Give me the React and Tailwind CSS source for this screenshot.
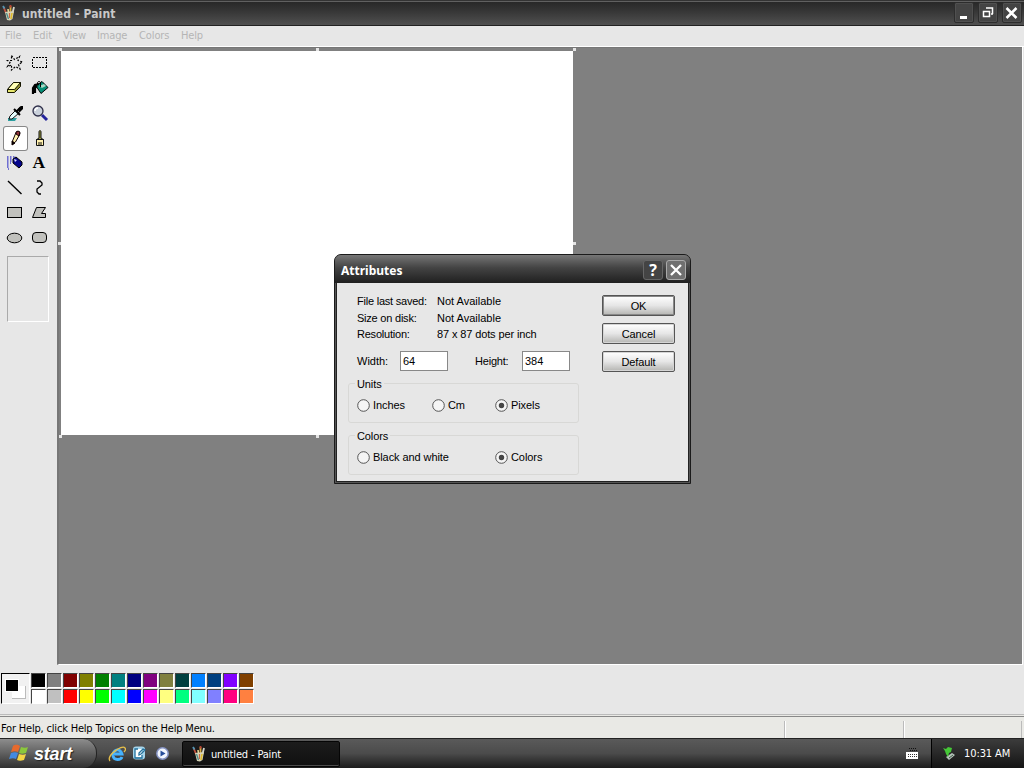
import React from "react";

const tahoma = "font-['DejaVu_Sans_Condensed','DejaVu_Sans',sans-serif] [font-stretch:condensed]";
const sans = "font-['Liberation_Sans',sans-serif]";

const toolIcons = [
  <g key="free">
    <path d="M8.500 4.500L11.500 8.500L16.500 5.500L15 9.500L19.500 11L15.500 13.500L17 18L12.500 15.500L8.500 19V14L4.500 15.500L7 11.500L4.500 9.500H8.500Z" fill="none" stroke="#000" strokeWidth="1.200" strokeDasharray="2 1.500" />
  </g>,
  <rect key="sel" x="4.500" y="6.500" width="14" height="10" fill="none" stroke="#000" strokeDasharray="2 1" shapeRendering="crispEdges" />,
  <g key="eraser" stroke="#151500">
    <path d="M4.500 13.500L10.500 6.500L17.500 6.500L17.500 10.500L11.500 16.500L4.500 16.500Z" fill="#8d8d30" />
    <path d="M4.500 13.500L10.500 6.500L17.500 6.500L11.500 13.500Z" fill="#ffffb5" />
    <path d="M5 14h6.500v2H5z" fill="#e6e66c" stroke="none" />
  </g>,
  <g key="fill" stroke="#000">
    <path d="M8 10L14 5.500L20 11.500L13 17.500Z" fill="#079078" />
    <path d="M11 10l5-2 2 2-4 2z" fill="#a9d8c4" stroke="none" />
    <path d="M12.500 11V7c0-2-3-2-3 0v2" fill="none" />
    <path d="M5 18v-6l2-3 4-1M7 17v-5l2-2" fill="none" strokeWidth="2.200" />
  </g>,
  <g key="pick">
    <path d="M5 17h9l-2 3H5z" fill="#2d9fa0" />
    <path d="M6 18l1-3 6-6 3 3-7 6z" fill="#e8ffff" stroke="#111" />
    <path d="M11 8l6 6M14 10l4-4" stroke="#000" strokeWidth="2" />
    <path d="M15 8l3-3h2v3l-4 4z" fill="#000" />
  </g>,
  <g key="zoom">
    <path d="M14 14l5 5" stroke="#23239b" strokeWidth="3" />
    <circle cx="10" cy="10" r="5" fill="#cad1db" stroke="#30304a" strokeWidth="1.300" />
    <path d="M7 10c0-2 1-3 3-3" fill="none" stroke="#fff" strokeWidth="1.500" />
  </g>,
  <g key="pencil" stroke="#100">
    <path d="M9.500 18.500V15L13 6.500L14.500 5.500L17 7L16.500 9L12.500 16Z" fill="#fff2b0" />
    <path d="M13 6l2-1 2 1-1 4-3-2z" fill="#90313a" />
    <path d="M9 19v-4l3 2z" fill="#000" />
  </g>,
  <g key="brush" stroke="#111">
    <path d="M11 12V6c0-2 2-2 2 0v6l3 2H8z" fill="#96963d" />
    <path d="M8.500 13.500h7v6h-7z" fill="#fff0ae" />
    <path d="M11 16v3M13 16v3" />
  </g>,
  <g key="spray">
    <path d="M4 6h8M4 8h6M4 10h5M4 12h4M4 14h3M4 16h2M5 18h1" stroke="#4949cc" strokeWidth="1.300" strokeDasharray="1.500 1.500" />
    <path d="M10 8l3-2 6 5v3l-3 3-6-5z" fill="#05058d" stroke="#000" />
    <path d="M11 8l3 1-2 2z" fill="#dcdcff" />
  </g>,
  <text key="text" x="4.500" y="17" fontSize="17.500" fontWeight="bold" fontFamily="Liberation Serif, serif">A</text>,
  <path key="line" d="M5 5l13.500 13" stroke="#000" strokeWidth="1.400" />,
  <path key="curve" d="M9 5h3l2 2v2l-5 4v3l2 2h2" fill="none" stroke="#000" strokeWidth="1.300" />,
  <rect key="rect" x="4.500" y="6.500" width="14" height="10" fill="#c1c1bd" stroke="#000" />,
  <path key="poly" d="M8.500 6.500h9l-4 6h4v4h-13z" fill="#c1c1bd" stroke="#000" />,
  <ellipse key="oval" cx="11.500" cy="12" rx="7.300" ry="4.800" fill="#c1c1bd" stroke="#000" />,
  <rect key="round" x="4.500" y="6.500" width="14" height="10" rx="3.500" fill="#c1c1bd" stroke="#000" />,
];

const palette = [
  "#000000", "#808080", "#800000", "#808000", "#008000", "#008080", "#000080", "#800080", "#808040", "#004040", "#0080ff", "#004080", "#8000ff", "#804000",
  "#ffffff", "#c0c0c0", "#ff0000", "#ffff00", "#00ff00", "#00ffff", "#0000ff", "#ff00ff", "#ffff80", "#00ff80", "#80ffff", "#8080ff", "#ff0080", "#ff8040",
];

function PaintIcon({ className = "" }) {
  return (
    <svg className={`h-4 w-4 shrink-0 ${className}`} viewBox="0 0 16 16">
      <path d="M5 8L3 3" stroke="#c2533e" strokeWidth="1.800" />
      <path d="M7.500 8L7 4" stroke="#f5e09a" strokeWidth="1.500" />
      <path d="M9.500 8V1" stroke="#d9ac42" strokeWidth="1.800" />
      <path d="M11.500 8l1.500-6" stroke="#d6d6cb" strokeWidth="1.800" />
      <path d="M2 1l1.500 2.500" stroke="#5795b5" strokeWidth="1.800" />
      <path d="M9.500 0v2.500" stroke="#b94436" strokeWidth="1.800" />
      <path d="M4 7l9-1-1.500 8L9 15.500 6 15z" fill="#d8d3b5" />
      <path d="M5.500 8l2 6" stroke="#4d8c8d" strokeWidth="1.300" />
      <path d="M8.500 8v5" stroke="#c76946" strokeWidth="1.200" />
      <path d="M11 8l-1 6" stroke="#dfbb28" strokeWidth="1.500" />
    </svg>
  );
}

function Caption({ kind }) {
  return (
    <div className="flex h-[21px] w-[20px] items-center justify-center rounded-[2px] border border-[#2d2d2d] bg-[#444] shadow-[inset_0_0_0_1px_#505050]">
      <svg className="h-4 w-4" viewBox="0 0 16 16" fill="none" stroke="#fff">
        {kind === "min" && <path d="M4 12.500h7" strokeWidth="3" />}
        {kind === "max" && <path d="M3.500 6.500h6v5h-6zM3 6.500h7M6 3h6.500V9M11 9h2" strokeWidth="1.500" />}
        {kind === "close" && <path d="M2.500 3l10 10M12.500 3l-10 10" strokeWidth="2.500" />}
      </svg>
    </div>
  );
}

function Radio({ label, checked, className = "" }) {
  return (
    <label className={`flex items-center gap-[3px] ${className}`}>
      <svg className="h-[13px] w-[13px] shrink-0" viewBox="0 0 13 13">
        <circle cx="6.500" cy="6.500" r="5.800" fill="#f5f5f5" stroke="#555" />
        {checked && <circle cx="6.500" cy="6.500" r="2.700" fill="#454545" />}
      </svg>
      <span className="whitespace-nowrap tracking-[-0.08px]">{label}</span>
    </label>
  );
}

function DialogButton({ children, primary }) {
  return (
    <button
      className={`h-[21px] w-[73px] rounded-[2px] border border-[#555] bg-linear-to-b from-white via-[#e6e6e6] to-[#b5b5b2] text-center leading-[20px] tracking-[-0.1px] ${primary ? "shadow-[inset_0_0_0_1px_#888]" : "shadow-[inset_0_0_0_1px_#d5d5d5]"}`}
    >
      {children}
    </button>
  );
}

function Group({ title, children, className = "" }) {
  return (
    <fieldset className={`h-[46px] w-[231px] rounded-[3px] border border-[#d8d8d6] ${className}`}>
      <legend className="ml-[6px] h-[14px] px-[2px] leading-[14px] tracking-[-0.1px]">{title}</legend>
      <div className="flex h-[30px] items-center pl-[8px]">{children}</div>
    </fieldset>
  );
}

function Attributes() {
  return (
    <section className={`absolute left-[334px] top-[254px] h-[230px] w-[357px] overflow-hidden rounded-t-[7px] border border-[#1b1b1b] bg-[#555] text-[11px] text-black ${sans}`}>
      <header className="flex h-[28px] items-center bg-linear-to-b from-[#777] via-[#444] via-45% to-[#202020] pl-[6px] pr-[4px] pt-[2px] text-white">
        <span className="flex-1 pt-[2px] font-['Noto_Sans',sans-serif] text-[12px] font-bold">Attributes</span>
        <div className="mr-[3px] flex h-[20px] w-[20px] items-center justify-center rounded-[3px] border border-[#666] bg-[#444] font-['Noto_Sans',sans-serif] text-[16px] font-bold leading-[18px]">?</div>
        <div className="flex h-[20px] w-[20px] items-center justify-center rounded-[3px] border border-[#aaa] bg-[#707070]">
          <svg className="h-[14px] w-[14px]" viewBox="0 0 14 14"><path d="M2 2l10 10M12 2L2 12" stroke="#fff" strokeWidth="2.300" /></svg>
        </div>
      </header>
      <div className="mx-[1px] flex h-[199px] border border-t-0 border-[#222] bg-[#e7e7e7] pl-[11px] pt-[10px]">
        <div className="w-[254px] shrink-0">
          <dl className="grid grid-cols-[80px_1fr] pl-[9px] leading-[16.500px]">
            <dt className="tracking-[-0.22px]">File last saved:</dt><dd>Not Available</dd>
            <dt className="tracking-[-0.22px]">Size on disk:</dt><dd>Not Available</dd>
            <dt className="tracking-[-0.22px]">Resolution:</dt><dd className="tracking-[-0.12px]">87 x 87 dots per inch</dd>
          </dl>
          <div className="mt-[8px] flex h-[20px] items-center pl-[9px]">
            <span className="w-[43px] pt-[2px]">Width:</span>
            <span className="h-[20px] w-[48px] border border-[#888] bg-white pl-[2px] leading-[18px]">64</span>
            <span className="ml-[27px] w-[47px] pt-[2px] tracking-[-0.2px]">Height:</span>
            <span className="h-[20px] w-[48px] border border-[#888] bg-white pl-[2px] leading-[18px]">384</span>
          </div>
          <Group title="Units" className="mt-[6px]">
            <Radio label="Inches" className="w-[75px]" />
            <Radio label="Cm" className="w-[63px]" />
            <Radio label="Pixels" checked />
          </Group>
          <Group title="Colors" className="mt-[6px]">
            <Radio label="Black and white" className="w-[138px]" />
            <Radio label="Colors" checked />
          </Group>
        </div>
        <div className="flex flex-col gap-[7px] pt-[2px]">
          <DialogButton primary>OK</DialogButton>
          <DialogButton>Cancel</DialogButton>
          <DialogButton>Default</DialogButton>
        </div>
      </div>
    </section>
  );
}

const handles = [
  "left-[-2px] top-[-3px]", "left-[255px] top-[-3px]", "left-[512px] top-[-3px]",
  "left-[-3px] top-[191px]", "left-[512px] top-[191px]",
  "left-[-2px] top-[384px]", "left-[255px] top-[384px]", "left-[512px] top-[384px]",
];

function Taskbar() {
  return (
    <footer className="flex h-[30px] items-stretch border-t border-[#222] bg-linear-to-b from-[#5a5a5a] via-[#4b4b4b] via-50% to-[#1c1c1c] text-white">
      <div className="flex w-[97px] items-center rounded-r-[14px] border-r border-[#222] bg-linear-to-b from-[#8d8d8d] via-[#646464] via-45% to-[#303030] pl-[9px]">
        <svg className="mr-[5px] h-[20px] w-[20px]" viewBox="0 0 20 20">
          <path d="M4 2c3-2 5-1 7 0L9 8C7 7 5 7 2 8z" fill="#e66a2d" />
          <path d="M12 3c3 1 5 1 7 0l-2 6c-3 1-5 1-7 0z" fill="#8bc83c" />
          <path d="M2 9c3-1 5-1 7 0l-2 6c-2-1-4-1-7 0z" fill="#438ae0" />
          <path d="M10 10c3 1 5 1 7 0l-2 6c-3 1-5 1-7 0z" fill="#f4d544" />
        </svg>
        <span className="font-['Liberation_Sans',sans-serif] text-[18px] font-bold italic leading-[24px] tracking-[-0.2px] [text-shadow:1px_1px_1px_#222]">start</span>
      </div>
      <div className="flex w-[85px] items-center gap-[6px] pl-[11px]">
        <svg className="h-[18px] w-[18px]" viewBox="0 0 18 18" fill="none">
          <path d="M14 12c-1 3-8 4-9-1-1-6 7-9 9-2H6" stroke="#46b3ff" strokeWidth="2.800" />
          <path d="M2 16C-2 11 14-1 17 3c1 1 0 3-1 4" stroke="#e6bf4b" strokeWidth="1.300" />
        </svg>
        <svg className="h-[17px] w-[17px]" viewBox="0 0 17 17">
          <rect x="1" y="1.500" width="12" height="13" rx="3" fill="#a5d4ea" />
          <rect x="3" y="4" width="7" height="8" fill="#fff" />
          <path d="M11 4L7 8v2l2-1 4-4zM6 4H3v9h7v-3" fill="none" stroke="#24729d" strokeWidth="1.300" />
        </svg>
        <svg className="h-[16px] w-[16px]" viewBox="0 0 16 16">
          <circle cx="7.500" cy="7.500" r="5.700" fill="#f2f6ff" stroke="#8492c2" strokeWidth="1.500" />
          <path d="M5.500 4.500l5 3-5 3z" fill="#254c9a" />
        </svg>
      </div>
      <div className={`mb-[1px] mt-[2px] flex w-[158px] items-center rounded-[2px] border border-[#050505] bg-linear-to-b from-[#1c1c1c] to-[#101010] pl-[8px] text-[11px] shadow-[inset_0_-1px_0_#4b4b4b] ${tahoma}`}>
        <PaintIcon className="mr-[4px]" />
        <span className="pt-[2px] tracking-[-0.15px]">untitled - Paint</span>
      </div>
      <div className="flex flex-1 items-center justify-end pr-[12px]">
        <svg className="h-[14px] w-[14px]" viewBox="0 0 14 14" shapeRendering="crispEdges">
          <path d="M4 1h7M5 3h7" stroke="#111" strokeDasharray="1 1" />
          <rect x="1" y="5" width="12" height="7" fill="#fff" />
          <path d="M3 7.500h9M3 9.500h9" stroke="#333" strokeDasharray="1 1" />
        </svg>
      </div>
      <div className={`flex w-[93px] items-center border-l border-black bg-linear-to-b from-[#3c3c3c] via-[#282828] to-[#141414] pl-[10px] text-[11px] ${tahoma}`}>
        <svg className="mr-[6px] h-[16px] w-[16px]" viewBox="0 0 16 16">
          <path d="M4 11l6-4 3 2-6 5z" fill="#b6c5bb" />
          <path d="M7 12l4-3" stroke="#425749" />
          <path d="M1 2l3 1 2-2 4 1-1 4-2 1-1 4-2-3-1-3z" fill="#45c737" />
        </svg>
        <span className="whitespace-nowrap pt-[1px] tracking-[-0.1px]">10:31 AM</span>
      </div>
    </footer>
  );
}

export default function App() {
  return (
    <div className={`relative flex h-[768px] w-[1024px] flex-col overflow-hidden bg-[#e7e7e7] text-[11px] text-black ${tahoma}`}>
      <header className="flex h-[26px] items-center border-b border-[#222] bg-linear-to-b from-[#252525] via-[#343434] via-40% to-[#505050] pl-[1px] pr-[2px] shadow-[inset_0_1px_0_#333,inset_0_2px_0_#606060]">
        <PaintIcon />
        <h1 className="ml-[5px] flex-1 pt-[2px] text-[12px] font-bold tracking-[0.12px] text-[#c9c9c9]">untitled - Paint</h1>
        <div className="flex gap-[4px]"><Caption kind="min" /><Caption kind="max" /><Caption kind="close" /></div>
      </header>
      <nav className="flex h-[21px] items-center border-b border-white pl-[5px] text-[#b5b5b5]">
        <span className="w-[28px]">File</span><span className="w-[30px]">Edit</span><span className="w-[34px] tracking-[-0.15px]">View</span>
        <span className="w-[42px] tracking-[-0.15px]">Image</span><span className="w-[42px] tracking-[-0.1px]">Colors</span><span className="tracking-[-0.2px]">Help</span>
      </nav>
      <div className="flex h-[618px]">
        <aside className="w-[57px] shrink-0 border-t border-[#c8c8c8] pl-[3px] pt-[3px]">
          <div className="grid grid-cols-[25px_25px] auto-rows-[25px]">
            {toolIcons.map((icon, i) => (
              <div key={i} className={i === 6 ? "rounded-[3px] bg-white shadow-[inset_0_0_0_1px_#888]" : ""}>
                <svg className="block h-[25px] w-[25px]" viewBox="0 0 25 25">{icon}</svg>
              </div>
            ))}
          </div>
          <div className="ml-[4px] mt-[5px] h-[66px] w-[42px] border border-b-white border-l-[#aaa] border-r-white border-t-[#aaa]" />
        </aside>
        <main className="mr-[2px] flex-1 border-b border-l-2 border-t border-b-white border-l-[#777] border-t-[#777] bg-[#808080] pl-[2px] pt-[3px] shadow-[1px_0_0_#fff]">
          <div className="relative h-[384px] w-[512px] bg-white">
            {handles.map((place) => <i key={place} className={`absolute h-[3px] w-[3px] bg-[#e5e5e5] ${place}`} />)}
          </div>
        </main>
      </div>
      <div className="flex h-[49px] items-start pl-[1px] pt-[8px]">
        <div className="h-[31px] w-[29px] border border-b-white border-l-black border-r-white border-t-black bg-[#f1f1f1]">
          <svg className="h-[27px] w-[25px]" viewBox="0 0 25 27" shapeRendering="crispEdges">
            <path d="M10 12h14v13H10z" fill="#bbb" /><path d="M10 12h13v12H10z" fill="#fff" />
            <path d="M3 5h14v13H3z" fill="#fff" /><path d="M4 6h12v11H4z" fill="#000" />
          </svg>
        </div>
        <div className="ml-[1px] grid grid-cols-[repeat(14,16px)] auto-rows-[16px]">
          {palette.map((color) => (
            <div key={color} className="h-[15px] w-[15px] border border-b-white border-l-[#444] border-r-white border-t-[#444]" style={{ backgroundColor: color }} />
          ))}
        </div>
      </div>
      <div className="flex h-[24px] border-t border-[#bbb] bg-[#e9e9e5] pt-[1px]">
        <div className="flex flex-1 items-center border-t border-[#888]">
          <span className="flex-1 pl-[1px] pt-[3px] tracking-[-0.19px]">For Help, click Help Topics on the Help Menu.</span>
          <div className="mt-[3px] h-[17px] w-[119px] border-l border-[#bbb] shadow-[inset_1px_0_0_#fff]" />
          <div className="mt-[3px] h-[17px] w-[118px] border-l border-[#bbb] shadow-[inset_1px_0_0_#fff]" />
          <div className="mt-[3px] h-[17px] w-[3px] border-l border-[#bbb]" />
        </div>
      </div>
      <Taskbar />
      <Attributes />
    </div>
  );
}
